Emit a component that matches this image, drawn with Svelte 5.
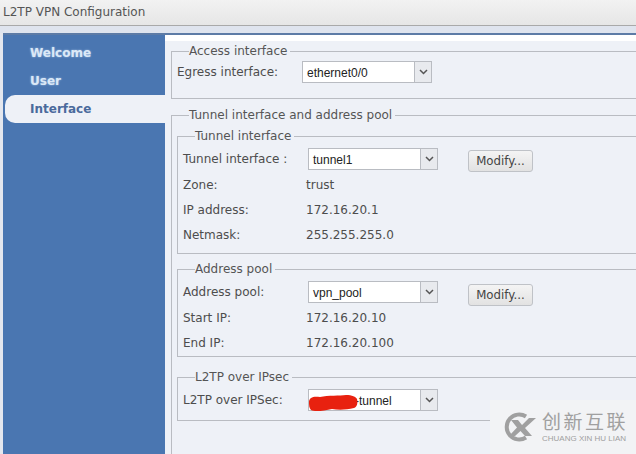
<script lang="ts">
    const nav = ["Welcome", "User", "Interface"];
</script>

{#snippet picker(text)}
    <div class="picker">
        <span class="picker-text">{text}</span>
        <span class="picker-arrow">
            <svg width="9" height="6" viewBox="0 0 9 6"><path d="M1 1L4.500 4.500L8 1" fill="none" stroke="#555" stroke-width="1.500"></path></svg>
        </span>
    </div>
{/snippet}

<div class="window">
    <header class="titlebar">L2TP VPN Configuration</header>
    <div class="gap"></div>
    <div class="body">
        <nav class="sidebar">
            {#each nav as item}
                <div class="nav-item" class:active={item == "Interface"}>{item}</div>
            {/each}
        </nav>
        <main class="content">
            <fieldset class="access">
                <legend>Access interface</legend>
                <div class="row egress">
                    <span>Egress interface:</span>
                    {@render picker("ethernet0/0")}
                </div>
            </fieldset>

            <fieldset class="outer">
                <legend>Tunnel interface and address pool</legend>

                <fieldset class="tunnel">
                    <legend>Tunnel interface</legend>
                    <div class="row first">
                        <span>Tunnel interface :</span>
                        {@render picker("tunnel1")}
                        <button>Modify...</button>
                    </div>
                    <div class="row"><span>Zone:</span><span class="value">trust</span></div>
                    <div class="row"><span>IP address:</span><span class="value">172.16.20.1</span></div>
                    <div class="row"><span>Netmask:</span><span class="value">255.255.255.0</span></div>
                </fieldset>

                <fieldset class="pool">
                    <legend>Address pool</legend>
                    <div class="row first">
                        <span>Address pool:</span>
                        {@render picker("vpn_pool")}
                        <button>Modify...</button>
                    </div>
                    <div class="row"><span>Start IP:</span><span class="value">172.16.20.10</span></div>
                    <div class="row"><span>End IP:</span><span class="value">172.16.20.100</span></div>
                </fieldset>

                <fieldset class="l2tp">
                    <legend>L2TP over IPsec</legend>
                    <div class="row first">
                        <span>L2TP over IPSec:</span>
                        <div class="scribbled">
                            {@render picker("xxxxxxx-tunnel")}
                            <svg class="scribble" width="50" height="22" viewBox="0 0 50 22"><path d="M1 12C1 7 6 6 12 7C20 5 32 6 38 5C44 5 48 7 49 9C50 13 49 17 46 18C38 20 30 20 24 19C16 21 6 22 3 20C1 18 1 15 1 12Z" fill="#e8210f"></path></svg>
                        </div>
                    </div>
                </fieldset>
            </fieldset>
        </main>
    </div>

    <div class="watermark">
        <svg width="36" height="34" viewBox="0 0 36 32">
            <path d="M25 5.500A12.500 12.500 0 1 0 25 26.500" fill="none" stroke="#a0a0a0" stroke-width="4"></path>
            <path d="M10 9H17L21 14L28 7H35L24 17L31 25H24L19.500 20L14 25H8L16 16.500Z" fill="#a0a0a0"></path>
        </svg>
        <div class="mark-text">
            <div class="mark-cn">创新互联</div>
            <div class="mark-en">CHUANG XIN HU LIAN</div>
        </div>
    </div>
</div>

<style>
    :global(body) {
        margin: 0;
    }

    .window {
        position: relative;
        width: 636px;
        height: 454px;
        overflow: hidden;
        background: #eef1f7;
        color: #4d4d4d;
        font-family: "DejaVu Sans", sans-serif;
        font-size: 12px;
    }

    .titlebar {
        height: 26px;
        box-sizing: border-box;
        padding: 4px 0 0 3px;
        line-height: 16px;
        color: #555;
        background: linear-gradient(#f2f2f2, #e6e6e6);
        border-bottom: 1px solid #a9a9a9;
    }

    .gap {
        height: 7px;
        background: #dfe4ee;
    }

    .body {
        display: flex;
        height: 421px;
        padding-left: 3px;
        background: #e4e7ee;
    }

    .sidebar {
        width: 162px;
        flex: none;
        box-sizing: border-box;
        padding-top: 4px;
        background: #4a76b1;
        border-top: 2px solid #5d7ba6;
    }

    .nav-item {
        height: 28px;
        line-height: 28px;
        padding-left: 27px;
        font-weight: bold;
        color: #dbe8f6;
        text-shadow: 0 0 2px #a8c4e6;
    }

    .nav-item.active {
        margin-left: 2px;
        padding-left: 25px;
        background: #eef1f7;
        color: #4a6a9c;
        text-shadow: none;
        border-radius: 10px 0 0 10px;
    }

    .content {
        flex: 1;
        min-width: 0;
        box-sizing: border-box;
        padding: 8px 0 0 6px;
        background: linear-gradient(#fff 6px, #eef1f7 6px);
        border-top: 2px solid #5d7ba6;
    }

    fieldset {
        margin: 0;
        padding: 0 0 0 5px;
        border: 1px solid #b9bcc2;
        border-right: none;
        min-width: 0;
    }

    legend {
        padding: 0 3px 0 0;
        margin-left: 12px;
        line-height: 16px;
        color: #555;
    }

    .access {
        height: 54px;
    }

    .outer {
        margin-top: 8px;
        height: 354px;
        border-bottom: none;
    }

    .tunnel {
        height: 124px;
        margin-top: 5px;
    }

    .pool {
        height: 94px;
        margin-top: 7px;
    }

    .l2tp {
        height: 50px;
        margin-top: 12px;
    }

    .row {
        display: flex;
        align-items: center;
        height: 25px;
    }

    .row > span:first-child {
        flex: none;
        width: 125px;
    }

    .value {
        margin-left: -2px;
    }

    .egress {
        height: 22px;
        margin-top: 2px;
    }

    .first {
        height: 22px;
        margin: 4px 0 2px;
    }

    .l2tp .first {
        margin-bottom: 0;
    }

    .picker {
        flex: none;
        display: flex;
        width: 130px;
        height: 22px;
        box-sizing: border-box;
        background: #fff;
        border: 1px solid #b9bcc2;
        color: #222;
        font-family: "Liberation Sans", sans-serif;
    }

    .picker-text {
        flex: 1;
        padding-left: 4px;
        line-height: 22px;
    }

    .picker-arrow {
        display: flex;
        align-items: center;
        justify-content: center;
        width: 16px;
        background: #e8eaee;
        border-left: 1px solid #b9bcc2;
    }

    button {
        width: 65px;
        height: 22px;
        margin: 4px 0 0 30px;
        padding: 0;
        font: inherit;
        font-size: 11.800px;
        color: #444;
        background: linear-gradient(#f4f4f4, #e2e2e2);
        border: 1px solid #bfc2c7;
        border-radius: 3px;
    }

    .pool button {
        margin-top: 6px;
    }

    .scribbled {
        position: relative;
    }

    .scribble {
        position: absolute;
        left: 0;
        top: 1px;
    }

    .watermark {
        position: absolute;
        right: 0;
        bottom: 0;
        display: flex;
        align-items: center;
        gap: 5px;
        width: 146px;
        height: 54px;
        box-sizing: border-box;
        padding-left: 11px;
        background: #f2f3f5;
        color: #a0a0a0;
    }

    .mark-cn {
        font-family: "Noto Sans CJK SC", sans-serif;
        font-size: 19px;
        line-height: 20px;
        letter-spacing: 2.500px;
    }

    .mark-en {
        margin-top: 3px;
        font-family: "Liberation Sans", sans-serif;
        font-size: 8px;
        line-height: 9px;
        white-space: nowrap;
    }
</style>
